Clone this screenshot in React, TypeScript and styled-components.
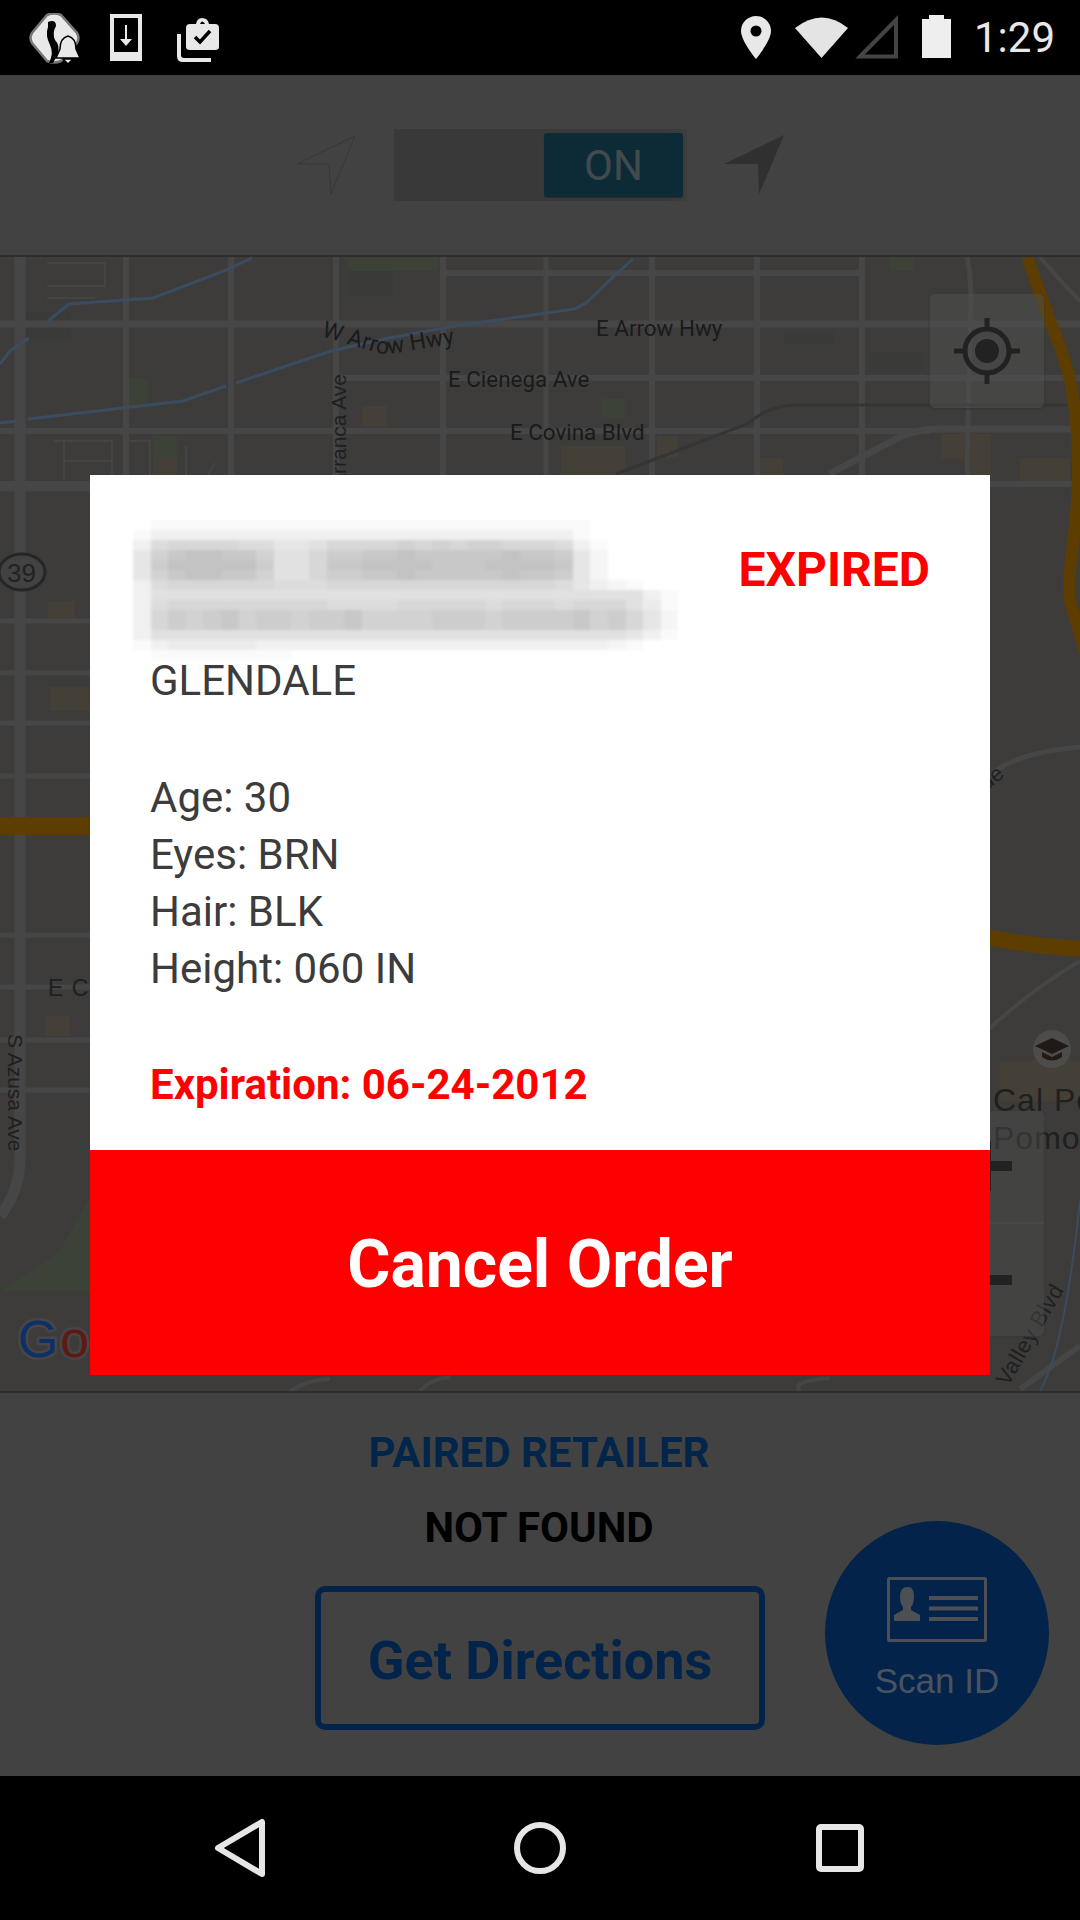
import React from "react";
import styled, { createGlobalStyle } from "styled-components";

const Global = createGlobalStyle`
  html, body { margin: 0; padding: 0; background: #000; }
  #root { width: 1080px; height: 1920px; overflow: hidden; }
  * { box-sizing: border-box; }
`;

const Screen = styled.div`
  position: relative;
  width: 1080px;
  height: 1920px;
  display: flex;
  flex-direction: column;
  font-family: Roboto, "Liberation Sans", sans-serif;
  background: #424242;
`;

const StatusBar = styled.header`
  height: 75px;
  flex: none;
  background: #000;
  display: flex;
  align-items: flex-start;
  justify-content: space-between;
  padding-left: 29px;
  padding-right: 25px;
  color: #e8e8e8;
`;

const IconGroup = styled.div`
  display: flex;
  align-items: flex-start;
  margin-top: ${(p: { $top: number }) => p.$top}px;
`;

const StatusSvg = styled.svg<{ $gap?: number }>`
  display: block;
  flex: none;
  margin-right: ${(p) => p.$gap ?? 0}px;
`;

const Clock = styled.span`
  font-size: 42px;
  line-height: 47px;
  margin-top: -1px;
  margin-left: 23px;
`;

const TopBar = styled.section`
  height: 182px;
  flex: none;
  background: #424242;
  border-bottom: 2px solid #2d2d2d;
  display: flex;
  align-items: center;
  justify-content: center;
`;

const Toggle = styled.div`
  width: 293px;
  height: 72px;
  margin: 0 37px 0 38px;
  background: linear-gradient(90deg, #393939 0, #393939 92%, #3e3e3e 100%);
  display: flex;
  align-items: center;
  justify-content: flex-end;
  padding-right: 4px;
`;

const Thumb = styled.div`
  width: 139px;
  height: 64px;
  border-radius: 3px;
  background: #0d2b36;
  box-shadow: 0 1px 1px #2a2a2a;
  color: #414b4f;
  font-size: 42px;
  display: flex;
  align-items: center;
  justify-content: center;
`;

const MapArea = styled.div`
  position: relative;
  height: 1134px;
  flex: none;
  overflow: hidden;
  background: #3d3c3a;
`;

const MapSvg = styled.svg`
  display: block;
  position: absolute;
  inset: 0;
`;

const MapButton = styled.div`
  position: absolute;
  left: 930px;
  top: 37px;
  width: 114px;
  height: 114px;
  border-radius: 5px;
  background: rgba(80, 80, 80, 0.5);
  box-shadow: 0 1px 2px #353535;
  display: flex;
  align-items: center;
  justify-content: center;
`;

const ZoomControl = styled.div`
  position: absolute;
  left: 930px;
  top: 854px;
  width: 114px;
  height: 225px;
  border-radius: 5px;
  background: rgba(74, 74, 74, 0.5);
  box-shadow: 0 1px 2px #383838;
  display: grid;
  grid-template-rows: 1fr 1fr;
`;

const ZoomCell = styled.div<{ $line?: boolean }>`
  position: relative;
  border-bottom: ${(p) => (p.$line ? "2px solid #484848" : "none")};
`;

const ZoomBar = styled.span<{ $top: number }>`
  position: absolute;
  left: 30px;
  top: ${(p) => p.$top}px;
  width: 52px;
  height: 10px;
  background: #222;
`;

const ZoomStem = styled.span`
  position: absolute;
  left: 51px;
  top: 30px;
  width: 10px;
  height: 50px;
  background: #222;
`;

const BottomPanel = styled.section`
  position: relative;
  flex: 1;
  background: #424242;
  border-top: 2px solid #2d2d2d;
  padding-top: 36px;
  display: flex;
  flex-direction: column;
  align-items: center;
`;

const PanelTitle = styled.div<{ $dark?: boolean }>`
  font-size: 42px;
  line-height: 47px;
  font-weight: 700;
  margin-right: 2px;
  color: ${(p) => (p.$dark ? "#000" : "#03254a")};
  margin-bottom: ${(p) => (p.$dark ? 35 : 28)}px;
`;

const OutlineButton = styled.div`
  width: 450px;
  height: 144px;
  border: 6px solid #03244a;
  border-radius: 10px;
  padding-top: 4px;
  display: flex;
  align-items: center;
  justify-content: center;
  color: #03244a;
  font-size: 54px;
  font-weight: 700;
`;

const Fab = styled.div`
  position: absolute;
  left: 825px;
  top: 128px;
  width: 224px;
  height: 224px;
  border-radius: 50%;
  background: #04234a;
  display: flex;
  flex-direction: column;
  align-items: center;
  padding-top: 56px;
  color: #49535f;
  font-family: "Liberation Sans", Arial, sans-serif;
  font-size: 35px;
  line-height: 40px;
`;

const FabLabel = styled.span`
  margin-top: 19px;
`;

const NavBar = styled.nav`
  height: 144px;
  flex: none;
  background: #000;
  display: grid;
  grid-template-columns: repeat(3, 300px);
  padding-left: 90px;
`;

const NavSlot = styled.div`
  display: flex;
  align-items: center;
  justify-content: center;
`;

const Modal = styled.div`
  position: absolute;
  left: 90px;
  top: 475px;
  width: 900px;
  height: 900px;
  background: #fff;
  display: flex;
  flex-direction: column;
`;

const ModalBody = styled.div`
  flex: 1;
  padding: 45px 60px 0;
  color: #3c3c3c;
  font-size: 42px;
  line-height: 57px;
`;

const ModalHead = styled.div`
  position: relative;
  height: 132px;
  display: flex;
  justify-content: flex-end;
`;

const Redaction = styled.div`
  position: absolute;
  left: -17px;
  top: 0;
  display: grid;
  grid-template-columns: repeat(32, 17.6px);
  grid-auto-rows: 10px;
  filter: blur(1.5px);
`;

const Cell = styled.span`
  display: block;
`;

const ExpiredTag = styled.div`
  margin-top: 22px;
  font-size: 48px;
  line-height: 56px;
  font-weight: 700;
  color: #f00;
`;

const InfoLine = styled.div`
  height: 57px;
`;

const InfoGroup = styled.div`
  margin-top: 60px;
`;

const ExpirationLine = styled.div`
  margin-top: 59px;
  color: #f00;
  font-weight: 700;
`;

const CancelButton = styled.div`
  height: 225px;
  flex: none;
  background: #f00;
  color: #fff;
  font-size: 66px;
  font-weight: 700;
  padding-top: 3px;
  display: flex;
  align-items: center;
  justify-content: center;
`;

const ROAD = "#464646";
const GREEN = "#3c4237";
const TAN = "#454037";
const SHADE = "#3a3a38";
const WATER = "#3a4c60";

const roadV: [number, number, number][] = [
  [20, 11, 1040], [126, 6, 476], [231, 6, 476], [336, 6, 476], [443, 6, 476], [546, 5, 476], [652, 6, 476],
  [757, 6, 476], [862, 6, 476],
];
const roadH: [number, number, number, number][] = [
  [323, 0, 1080, 7], [272, 443, 862, 6], [377, 336, 1080, 6], [430, 0, 930, 6], [483, 0, 1080, 6],
  [488, 0, 90, 5], [620, 0, 90, 5], [672, 0, 90, 5], [722, 0, 90, 5], [775, 0, 90, 5],
  [934, 0, 90, 5], [986, 0, 90, 5], [1039, 0, 90, 5], [1089, 0, 90, 5],
];
const blocks: [number, number, number, number, string][] = [
  [348, 257, 90, 13, GREEN], [129, 377, 19, 28, GREEN], [153, 435, 24, 22, GREEN],
  [153, 457, 24, 18, TAN], [362, 405, 25, 20, TAN], [890, 257, 24, 13, GREEN],
  [601, 398, 24, 20, GREEN], [561, 445, 64, 30, TAN], [657, 435, 21, 22, TAN],
  [760, 457, 23, 18, TAN], [941, 433, 50, 25, TAN], [965, 458, 26, 18, TAN],
  [1020, 457, 50, 25, TAN], [48, 600, 26, 18, TAN], [50, 686, 40, 24, TAN],
  [45, 1015, 25, 20, TAN], [26, 310, 45, 30, SHADE], [348, 270, 45, 25, SHADE],
  [784, 330, 50, 14, SHADE], [869, 350, 55, 20, SHADE], [945, 990, 45, 60, TAN],
  [1000, 1060, 80, 40, TAN],
];

const redactionRows = [
  "01111111111111111111111111000000",
  "13333333333333333333333331000000",
  "37888877556888898989988873100000",
  "59bccbb9668aabbcbbbbbcbba5200000",
  "5accccca668bbccccbbbccccb5200000",
  "59bccbb9668aabbcbbbbbcbba5200000",
  "37888888777888888888888875321000",
  "36666666666666666666666666666310",
  "37888888888777788888788878886410",
  "38a9ab9aa9aab9999aaa9aaaab9a8520",
  "38a9ab9aa9aab9999aaa9aaaab9a8520",
  "36666666666666666666666666665310",
  "13444443333333333333333333321000",
  "01111111100000000000000000000000",
];

const shade = (c: string) => {
  const v = 255 - parseInt(c, 16) * 5;
  return `rgb(${v},${v},${v})`;
};

const MapDrawing = () => (
  <MapSvg width={1080} height={1134} viewBox="0 256 1080 1134">
    {blocks.map(([x, y, w, h, c], i) => (
      <rect key={i} x={x} y={y} width={w} height={h} fill={c} />
    ))}
    <path d="M0 1290L60 1250L90 1195V1290Z" fill={GREEN} />
    <g fill="none" stroke="#444" strokeWidth="2">
      <path d="M47 262H105V285H47M47 297H95M54 440H112V488H54M64 440V488M64 460H112M130 440H150V480M186 445V480H205L215 462" />
    </g>
    {roadV.map(([x, w, end]) => (
      <rect key={x} x={x - w / 2} y={256} width={w} height={end - 256} fill={ROAD} />
    ))}
    {roadH.map(([y, a, b, h], i) => (
      <rect key={i} x={a} y={y - h / 2} width={b - a} height={h} fill={ROAD} />
    ))}
    <g fill="none" stroke={ROAD} strokeLinejoin="round">
      <path d="M967 256C975 290 968 330 967 490" strokeWidth="5" />
      <path d="M829 473L898 437Q915 428 940 428H1080" strokeWidth="7" />
      <path d="M20 1040V1156Q20 1190 0 1215" strokeWidth="11" />
      <path d="M990 775Q1013 752 1080 746" strokeWidth="5" />
      <path d="M990 1027Q1030 990 1080 960" strokeWidth="4" />
      <path d="M1020 1388L1080 1345" strokeWidth="6" />
      <path d="M290 1390Q310 1378 330 1378M420 1390Q430 1378 450 1376M800 1390Q790 1380 830 1377" strokeWidth="4" />
      <path d="M1040 256Q1060 280 1080 300" strokeWidth="4" />
      <path d="M1040 1390Q1064 1350 1080 1200" stroke={WATER} strokeWidth="2" />
    </g>
    <path d="M616 473L747 423Q770 404 795 404H1080" fill="none" stroke="#353535" strokeWidth="3" />
    <g fill="none" stroke={WATER} strokeWidth="3">
      <path d="M252 257L224 270L153 297L69 303L48 320M29 337L10 350L0 363" />
      <path d="M0 422L18 420M28 418L183 400L226 385M236 382L331 350L389 337L455 325L574 308L586 302L612 277L633 258" />
    </g>
    <g fill="none" stroke="#5e3e00">
      <path d="M1027 256L1050 320C1066 360 1078 390 1078 470C1078 530 1066 570 1070 600L1090 668" strokeWidth="12" />
      <path d="M0 825H90" strokeWidth="18" />
      <path d="M985 936Q1030 945 1085 948" strokeWidth="16" />
    </g>
    <g fontFamily="Roboto, sans-serif" fontSize="22.4" fill="#1a1a1a">
      <path id="arrow-w" d="M321 335L378 352Q388 354 396 352L452 343" fill="none" />
      <text fontSize="23">
        <textPath href="#arrow-w">W Arrow Hwy</textPath>
      </text>
      <text x={596} y={335}>E Arrow Hwy</text>
      <text x={448} y={386}>E Cienega Ave</text>
      <text x={510} y={439}>E Covina Blvd</text>
    </g>
    <g fontFamily="'Liberation Sans', sans-serif" fontSize="21" fill="#1f1f1f">
      <text transform="translate(346 373) rotate(-90)" textAnchor="end">
        Barranca Ave
      </text>
      <text x={48} y={995} fontSize="23" letterSpacing="1">E Ca</text>
      <text transform="translate(8 1033) rotate(90)" fontSize="21">S Azusa Ave</text>
      <text x={993} y={1110} fontSize="32" letterSpacing="1">Cal Po</text>
      <text x={993} y={1148} fontSize="32" letterSpacing="1">Pomo</text>
      <text transform="translate(986 790) rotate(-38)" fontSize="22">de</text>
      <text transform="translate(1008 1386) rotate(-60)" fontSize="22" letterSpacing="0.5">Valley Blvd</text>
    </g>
    <ellipse cx={22} cy={571} rx={23} ry={18} fill="#424242" stroke="#262626" strokeWidth="3" />
    <text x={7} y={581} fontFamily="'Liberation Sans', sans-serif" fontSize="26" fill="#222">39</text>
    <g fontFamily="'Liberation Sans', sans-serif" fontSize="52" stroke="#464646" strokeWidth="5" paintOrder="stroke">
      <text x={18} y={1356} fill="#0f3067">G</text>
      <text x={60} y={1356} fill="#5e1a12">o</text>
    </g>
    <circle cx={1052} cy={1048} r={19} fill="#4e4c4a" />
    <path d="M1052 1037L1069 1045L1052 1053L1035 1045ZM1042 1051V1056Q1052 1063 1062 1056V1051L1052 1056Z" fill="#201a17" />
  </MapSvg>
);

export default function App() {
  return (
    <Screen>
      <Global />
      <StatusBar>
        <IconGroup $top={13}>
          <StatusSvg width={52} height={52} viewBox="0 0 52 52" $gap={29}>
            <path d="M18 2Q25-1 32 2L48 20Q51 25 48 30L32 48Q25 51 18 48L3 30Q0 25 3 20Z" fill="#e8e8e8" stroke="#777" strokeWidth="2.5" />
            <path d="M19 9Q27 6 27 13Q23 20 26 27Q31 32 29 41L24 50H20Q25 40 21 32Q16 22 19 14Z" fill="#000" />
            <path d="M39 23Q47 25 47 36L51 45H27L31 36Q31 25 39 23ZM34 46H44L39 51Z" fill="#e8e8e8" stroke="#000" strokeWidth="1.500" />
          </StatusSvg>
          <StatusSvg width={32} height={48} viewBox="0 0 32 48" $gap={35} style={{ marginTop: 1 }}>
            <path fillRule="evenodd" d="M0 0H32V47H0ZM4 4V38H28V4Z" fill="#e8e8e8" />
            <path d="M15 11H17V25H22L16 32L10 25H15Z" fill="#e8e8e8" />
          </StatusSvg>
          <StatusSvg width={43} height={48} viewBox="0 0 43 48" style={{ marginTop: 5 }}>
            <path d="M0 16H4V37Q4 40 7 40H34V44H6Q0 44 0 38Z" fill="#e8e8e8" />
            <path fillRule="evenodd" d="M13 6H19Q20 0 25 0Q31 0 32 6H38Q42 6 42 10V29Q42 32 38 32H13Q9 32 9 29V10Q9 6 13 6ZM23 6H28Q27 3.500 25 3.500Q24 3.500 23 6Z" fill="#e8e8e8" />
            <path d="M18 19L23 24L33 13" fill="none" stroke="#000" strokeWidth="3.500" />
          </StatusSvg>
        </IconGroup>
        <IconGroup $top={15}>
          <StatusSvg width={30} height={44} viewBox="0 0 30 44" $gap={24}>
            <path fillRule="evenodd" d="M15 1C7 1 0 7.500 0 16C0 26 15 44 15 44C15 44 30 26 30 16C30 7.500 23 1 15 1ZM15 10.500A5.500 5.500 0 1 1 15 21.500A5.500 5.500 0 1 1 15 10.500Z" fill="#e8e8e8" />
          </StatusSvg>
          <StatusSvg width={54} height={44} viewBox="0 0 54 44" $gap={6}>
            <path d="M0 13Q27-8 53 13L26.500 43Z" fill="#e4e4e4" />
          </StatusSvg>
          <StatusSvg width={44} height={44} viewBox="0 0 44 44" $gap={23}>
            <path d="M41 5V41.500H5Z" fill="none" stroke="#444" strokeWidth="4" />
          </StatusSvg>
          <StatusSvg width={29} height={44} viewBox="0 0 29 44">
            <path d="M7 0H22V4H29V43H0V4H7Z" fill="#eee" />
          </StatusSvg>
          <Clock>1:29</Clock>
        </IconGroup>
      </StatusBar>

      <TopBar>
        <svg width={60} height={60} viewBox="0 0 60 60">
          <path d="M59 1L1 29H33L35 59Z" fill="none" stroke="#383838" strokeWidth="1" />
        </svg>
        <Toggle>
          <Thumb>ON</Thumb>
        </Toggle>
        <svg width={60} height={60} viewBox="0 0 60 60">
          <path d="M60 0L0 29H34L35 59Z" fill="#303030" />
        </svg>
      </TopBar>

      <MapArea>
        <MapDrawing />
        <MapButton>
          <svg width={66} height={66} viewBox="0 0 66 66">
            <circle cx={33} cy={33} r={22} fill="none" stroke="#222" strokeWidth="5" />
            <circle cx={33} cy={33} r={12} fill="#222" />
            <path d="M33 0V11M33 55V66M0 33H11M55 33H66" stroke="#222" strokeWidth="5" />
          </svg>
        </MapButton>
        <ZoomControl>
          <ZoomCell $line>
            <ZoomStem />
            <ZoomBar $top={50} />
          </ZoomCell>
          <ZoomCell>
            <ZoomBar $top={51} />
          </ZoomCell>
        </ZoomControl>
      </MapArea>

      <BottomPanel>
        <PanelTitle>PAIRED RETAILER</PanelTitle>
        <PanelTitle $dark>NOT FOUND</PanelTitle>
        <OutlineButton>Get Directions</OutlineButton>
        <Fab>
          <svg width={100} height={65} viewBox="0 0 100 65">
            <rect x={1.500} y={1.500} width={97} height={62} rx={1} fill="none" stroke="#4c4f53" strokeWidth="3" />
            <path d="M21 10Q27 10 27 19Q27 27 24 30V33L33 38V44H7V38L16 33V30Q13 27 13 19Q13 10 21 10Z" fill="#4c4f53" />
            <path d="M42 21H91M42 31.500H91M42 42H91" stroke="#4c4f53" strokeWidth="4" />
          </svg>
          <FabLabel>Scan ID</FabLabel>
        </Fab>
      </BottomPanel>

      <NavBar>
        <NavSlot>
          <svg width={54} height={60} viewBox="0 0 54 60">
            <path d="M49 4V56L5 30Z" fill="none" stroke="#e6e6e6" strokeWidth="6" strokeLinejoin="round" />
          </svg>
        </NavSlot>
        <NavSlot>
          <svg width={52} height={52} viewBox="0 0 52 52">
            <circle cx={26} cy={26} r={23} fill="none" stroke="#e6e6e6" strokeWidth="6" />
          </svg>
        </NavSlot>
        <NavSlot>
          <svg width={48} height={48} viewBox="0 0 48 48">
            <rect x={3} y={3} width={42} height={42} rx={2} fill="none" stroke="#e6e6e6" strokeWidth="6" />
          </svg>
        </NavSlot>
      </NavBar>

      <Modal>
        <ModalBody>
          <ModalHead>
            <Redaction>
              {redactionRows.flatMap((row, r) =>
                row.split("").map((c, i) => <Cell key={`${r}-${i}`} style={{ background: shade(c) }} />)
              )}
            </Redaction>
            <ExpiredTag>EXPIRED</ExpiredTag>
          </ModalHead>
          <InfoLine>GLENDALE</InfoLine>
          <InfoGroup>
            <InfoLine>Age: 30</InfoLine>
            <InfoLine>Eyes: BRN</InfoLine>
            <InfoLine>Hair: BLK</InfoLine>
            <InfoLine>Height: 060 IN</InfoLine>
          </InfoGroup>
          <ExpirationLine>Expiration: 06-24-2012</ExpirationLine>
        </ModalBody>
        <CancelButton>Cancel Order</CancelButton>
      </Modal>
    </Screen>
  );
}
